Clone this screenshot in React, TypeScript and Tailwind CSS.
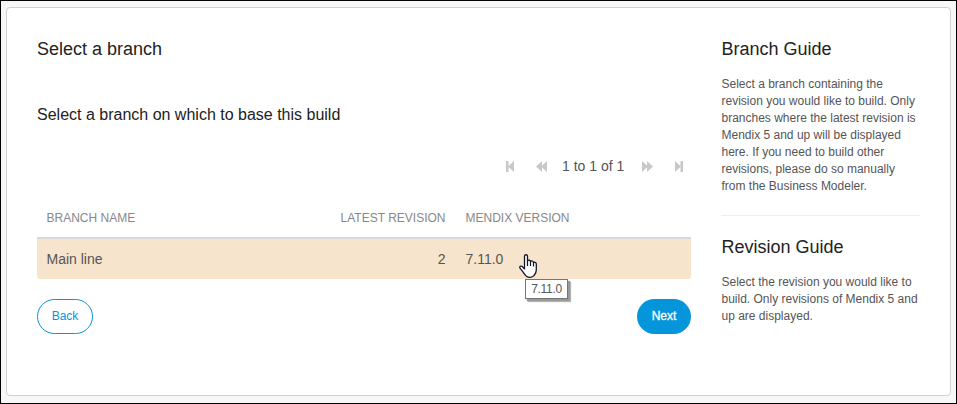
function Pager() {
  return (
    <div className="mt-[31px] flex h-5 items-center pr-2 text-[14px] leading-5 text-[#555]">
      <svg className="ml-auto h-[11px] w-2" viewBox="0 0 8 11" fill="#c8c8c8">
        <path d="M0 0h2.5v11H0zM8 0v11L2 5.5z" />
      </svg>
      <svg className="ml-[22px] h-[11px] w-[11px]" viewBox="0 0 11 11" fill="#c8c8c8">
        <path d="M6 0v11L0 5.5zM11 0v11L5 5.5z" />
      </svg>
      <span className="mx-[15px] w-[65px] whitespace-nowrap">1 to 1 of 1</span>
      <svg className="h-[11px] w-[11px]" viewBox="0 0 11 11" fill="#c8c8c8">
        <path d="M0 0v11l6-5.5zM5 0v11l6-5.5z" />
      </svg>
      <svg className="ml-[22px] h-[11px] w-2" viewBox="0 0 8 11" fill="#c8c8c8">
        <path d="M5.5 0H8v11H5.5zM0 0v11l6-5.5z" />
      </svg>
    </div>
  );
}

function BranchTable() {
  return (
    <div className="mt-[22px]">
      <div className="flex h-[41px] items-center border-b-2 border-[#d7d7de] text-[12px] text-[#888]">
        <span className="w-[199px] pl-[9.5px]">BRANCH NAME</span>
        <span className="w-[209.5px] text-right">LATEST REVISION</span>
        <span className="ml-5">MENDIX VERSION</span>
      </div>
      <div className="flex h-10 items-center rounded-b-[3px] bg-[#f6e4cc] text-[14px] text-[#555]">
        <span className="w-[199px] pl-[9.5px]">Main line</span>
        <span className="w-[209.5px] text-right">2</span>
        <span className="ml-5">7.11.0</span>
      </div>
    </div>
  );
}

function Pointer() {
  return (
    <svg className="absolute left-[518px] top-[253px] h-6 w-[18px]" viewBox="0 0 18 24">
      <path
        d="M5.5 15.5V2.3C5.5.2 8.5.2 8.5 2.3V7C9.2 5.7 11.2 6 11.5 7.5C12.5 6.3 14.2 7 14.5 8.5C15.8 7.8 17.3 8.6 17.3 10V16C17.3 19 16 20.2 15 21.5C13.5 23.8 8.6 24 6.7 21.6C5 19.3 3.5 17.2 1.2 14.4C-.1 12.3 2 11.5 3.3 12.6L5.5 15"
        fill="#fff"
        stroke="#16162a"
        strokeWidth="1.3"
        strokeLinejoin="round"
      />
      <path d="M8.5 6.5v5.5M11.5 7.5V12M14.5 8.5v4" fill="none" stroke="#16162a" strokeWidth="1.2" />
    </svg>
  );
}

export default function App() {
  return (
    <div className="relative h-[404px] w-[957px] overflow-hidden border border-black bg-[#f8f7f8] pl-[5px] pt-[6px] font-['Liberation_Sans',Arial,sans-serif]">
      <div className="flex h-[389px] w-[945px] rounded-[4px] border border-[#d0d0d0] bg-white pl-[30px] pt-[30px]">
        <main className="w-[654px]">
          <h1 className="text-[18px] leading-[22px] text-[#222]">Select a branch</h1>
          <h2 className="mt-[45px] text-[16px] leading-5 text-[#222]">Select a branch on which to base this build</h2>
          <Pager />
          <BranchTable />
          <div className="mt-5 flex justify-between text-[12px]">
            <button className="h-[35px] w-14 rounded-full border border-[#0595db] pb-[2px] text-[#0595db]">Back</button>
            <button className="h-[35px] w-[54px] rounded-full bg-[#0595db] pb-[2px] text-white [-webkit-text-stroke:0.3px_white]">Next</button>
          </div>
        </main>
        <aside className="ml-[30px] w-[199px] text-[12px] leading-[17px] text-[#555]">
          <h3 className="pl-[0.5px] text-[18px] leading-[22px] text-[#222]">Branch Guide</h3>
          <p className="mt-4 whitespace-nowrap pl-[0.5px]">
            Select a branch containing the<br />
            revision you would like to build. Only<br />
            branches where the latest revision is<br />
            Mendix 5 and up will be displayed<br />
            here. If you need to build other<br />
            revisions, please do so manually<br />
            from the Business Modeler.
          </p>
          <hr className="mt-5 border-[#eee]" />
          <h3 className="mt-5 pl-[0.5px] text-[18px] leading-[22px] text-[#222]">Revision Guide</h3>
          <p className="mt-4 whitespace-nowrap pl-[0.5px]">
            Select the revision you would like to<br />
            build. Only revisions of Mendix 5 and<br />
            up are displayed.
          </p>
        </aside>
      </div>
      <div className="absolute left-[524px] top-[278px] flex h-5 w-[43px] items-center justify-center border border-[#767676] bg-white text-[12px] tracking-[-0.3px] text-[#575757] shadow-[2px_2px_1px_#999,3px_3px_1px_#bbb]">
        7.11.0
      </div>
      <Pointer />
    </div>
  );
}
